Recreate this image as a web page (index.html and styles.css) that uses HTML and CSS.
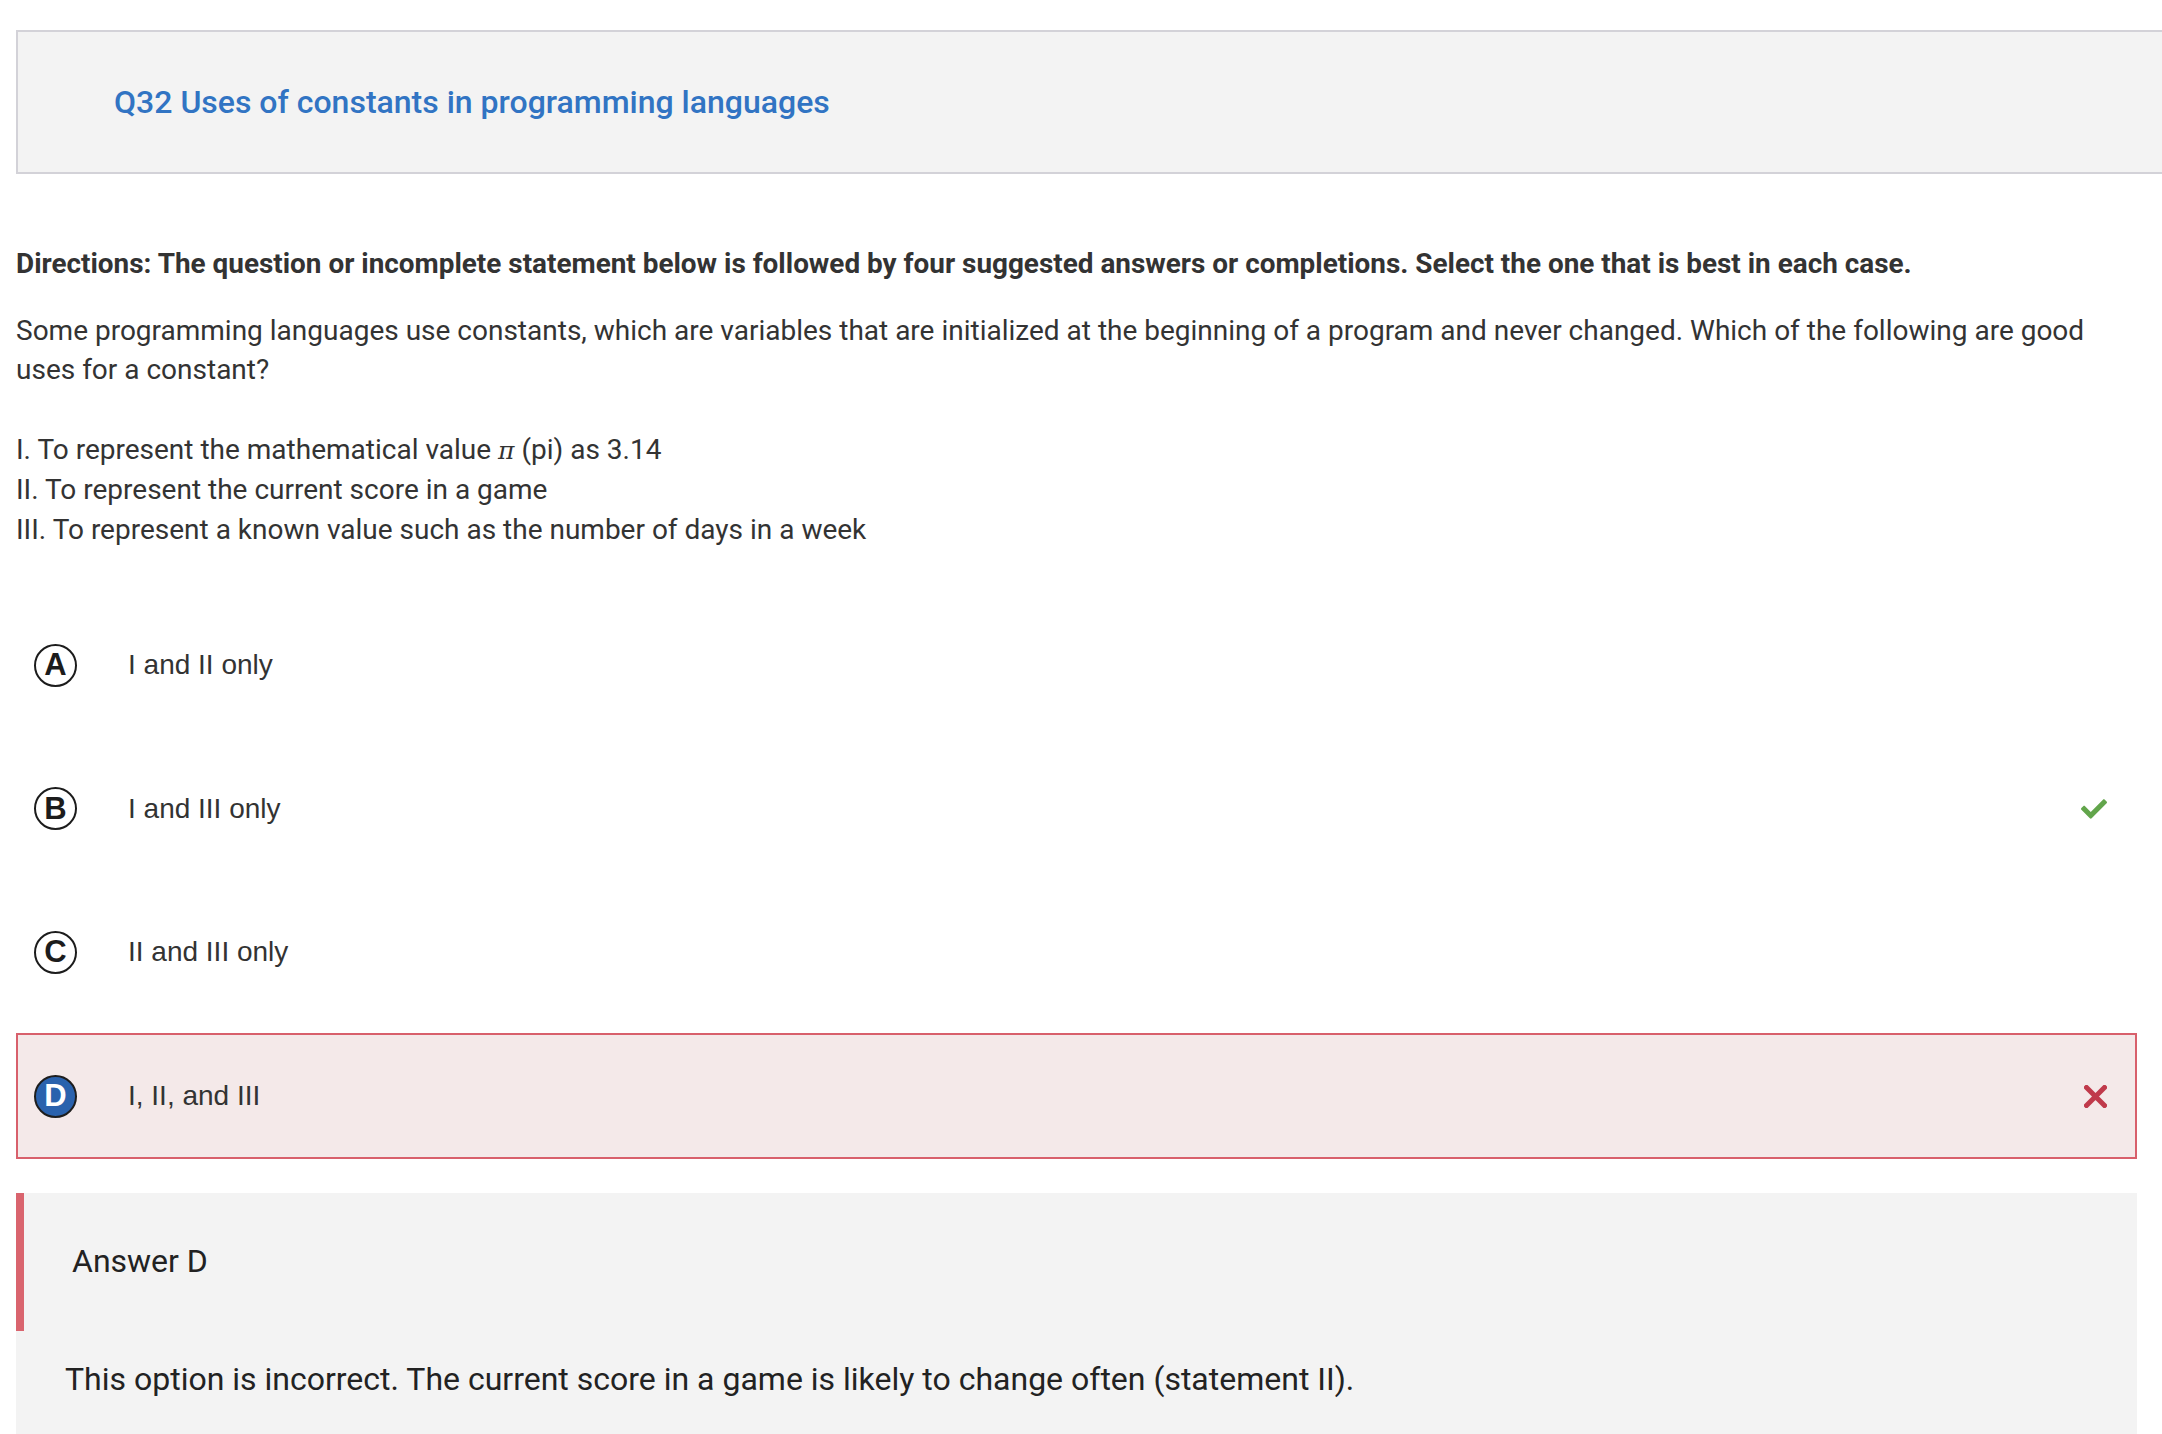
FILE: index.html
```html
<!DOCTYPE html>
<html lang="en">
<head>
<meta charset="utf-8">
<title>Q32 Uses of constants in programming languages</title>
<link rel="stylesheet" href="styles.css">
</head>
<body>
<div class="page">
  <header class="qhead">
    <h1 class="qtitle">Q32 Uses of constants in programming languages</h1>
  </header>

  <p class="directions">Directions: The question or incomplete statement below is followed by four suggested answers or completions. Select the one that is best in each case.</p>

  <p class="stem">Some programming languages use constants, which are variables that are initialized at the beginning of a program and never changed. Which of the following are good uses for a constant?</p>

  <p class="stem statements">I. To represent the mathematical value <i class="pi">π</i> (pi) as 3.14<br>II. To represent the current score in a game<br>III. To represent a known value such as the number of days in a week</p>

  <ul class="options">
    <li class="option">
      <span class="letter">A</span>
      <span class="otext">I and II only</span>
    </li>
    <li class="option">
      <span class="letter">B</span>
      <span class="otext">I and III only</span>
      <svg class="mark" width="26" height="20" viewBox="0 66 512 380" aria-hidden="true"><path fill="#62a54b" d="M173.898 439.404l-166.4-166.4c-9.997-9.997-9.997-26.206 0-36.204l36.203-36.204c9.997-9.998 26.207-9.998 36.204 0L192 312.69 432.095 72.596c9.997-9.997 26.207-9.997 36.204 0l36.203 36.204c9.997 9.997 9.997 26.206 0 36.204l-294.4 294.401c-9.998 9.997-26.207 9.997-36.204-.001z"/></svg>
    </li>
    <li class="option">
      <span class="letter">C</span>
      <span class="otext">II and III only</span>
    </li>
    <li class="option wrong">
      <span class="letter selected">D</span>
      <span class="otext">I, II, and III</span>
      <svg class="mark" width="23" height="23" viewBox="0 0 23 23" aria-hidden="true"><path d="M2.5 2.5 L20.5 20.5 M20.5 2.5 L2.5 20.5" stroke="#c03a4b" stroke-width="5" stroke-linecap="square"/></svg>
    </li>
  </ul>

  <section class="answer">
    <h2 class="answer-title">Answer D</h2>
    <p class="answer-text">This option is incorrect. The current score in a game is likely to change often (statement II).</p>
  </section>
</div>
</body>
</html>
```

FILE: styles.css
```css
html {
  overflow: hidden;
}
body {
  margin: 0;
  background: #ffffff;
  color: #333333;
  font-family: Roboto, "Liberation Sans", Arial, sans-serif;
}
.page {
  padding: 30px 25px 0 16px;
}
.qhead {
  height: 140px;
  margin-right: -60px;
  background: #f3f3f3;
  border: 2px solid #d3d2d8;
  display: flex;
  align-items: center;
  padding-left: 96px;
}
.qtitle {
  margin: 0;
  font-size: 32px;
  font-weight: 500;
  color: #3174c3;
  line-height: 1.2;
}
.directions {
  margin: 70px 0 0;
  font-size: 27.9px;
  font-weight: 700;
  line-height: 39.5px;
  color: #333333;
}
.stem {
  margin: 27px 0 0;
  font-size: 28px;
  line-height: 39.5px;
  color: #333333;
}
.stem.statements {
  margin-top: 40px;
}
.pi {
  font-family: "DejaVu Serif", "Liberation Serif", serif;
  font-size: 25px;
}
.options {
  list-style: none;
  margin: 53px 0 0;
  padding: 0;
  display: flex;
  flex-direction: column;
  gap: 17.7px;
}
.option {
  height: 126px;
  box-sizing: border-box;
  border: 2px solid transparent;
  display: flex;
  align-items: center;
  padding: 0 28px 0 16px;
}
.option.wrong {
  border-color: #d8606c;
  background: #f4e9e9;
}
.letter {
  width: 43px;
  height: 43px;
  box-sizing: border-box;
  border: 2px solid #1c1c1c;
  border-radius: 50%;
  display: flex;
  align-items: center;
  justify-content: center;
  font-family: "Liberation Sans", Arial, sans-serif;
  font-weight: 700;
  font-size: 31px;
  color: #1c1c1c;
  flex: none;
}
.letter.selected {
  background: #2a62ad;
  color: #ffffff;
  border-color: #1e1e1e;
}
.otext {
  margin-left: 51px;
  font-family: "Liberation Sans", Arial, sans-serif;
  font-size: 28px;
  color: #333333;
  flex: 1;
}
.mark {
  flex: none;
  display: block;
}
.answer {
  margin-top: 34px;
  background: #f3f3f3;
  padding-bottom: 80px;
}
.answer-title {
  margin: 0;
  border-left: 8px solid #d9646e;
  padding: 46px 0 47px 48px;
  font-size: 32px;
  font-weight: 400;
  line-height: 45px;
  color: #222222;
}
.answer-text {
  margin: 24px 0 0;
  padding-left: 49px;
  font-size: 32px;
  line-height: 48px;
  color: #222222;
}
```
